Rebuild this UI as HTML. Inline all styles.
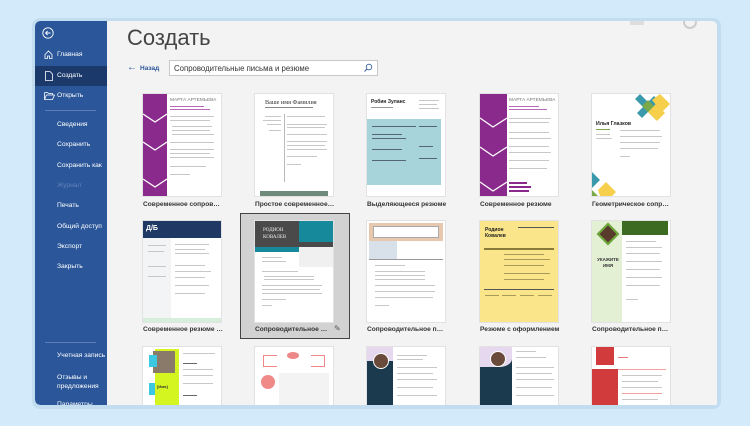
<!DOCTYPE html>
<html><head><meta charset="utf-8"><style>
*{margin:0;padding:0;box-sizing:border-box}
body{width:750px;height:426px;background:#d2eafa;position:relative;overflow:hidden;font-family:"Liberation Sans","DejaVu Sans",sans-serif}
.abs{position:absolute}
.frame{left:32px;top:18px;width:689px;height:391px;background:#c3ddf0;border-radius:8px}
.win{left:35px;top:21px;width:682px;height:384px;background:#f3f3f3;border-radius:5px 5px 0 5px;overflow:hidden}
.side{left:0;top:0;width:72px;height:384px;background:#2b579a;border-radius:5px 0 0 5px;overflow:hidden}
.side .it{position:absolute;left:22px;color:#fff;font-size:6.7px;white-space:nowrap}
.t{position:absolute;background:#fff;box-shadow:0 0 0 1px #e2e2e2;overflow:hidden}
.lbl{position:absolute;font-size:6.6px;font-weight:bold;color:#333;white-space:nowrap;width:80px;overflow:hidden;text-overflow:ellipsis}
.l{position:absolute;height:1px;background:#c8c8c8}
</style></head><body>
<div class="abs frame"></div>
<div class="abs win">
 <div class="abs side">
  <svg class="abs" style="left:7px;top:6px" width="12" height="12" viewBox="0 0 12 12"><circle cx="6" cy="6" r="5.2" fill="none" stroke="#fff" stroke-width=".9"/><path d="M8.5 6H3.6M5.6 4L3.6 6l2 2" fill="none" stroke="#fff" stroke-width=".9"/></svg>
  <svg class="abs" style="left:9px;top:29px" width="9" height="9" viewBox="0 0 9 9"><path d="M1 4.5L4.5 1 8 4.5V8.5H5.5V6H3.5V8.5H1z" fill="none" stroke="#fff" stroke-width=".8"/></svg>
  <div class="it" style="top:30px">Главная</div>
  <div class="abs" style="left:0;top:45px;width:72px;height:20px;background:#1b3a6b"></div>
  <svg class="abs" style="left:10px;top:50px" width="8" height="10" viewBox="0 0 8 10"><path d="M.5.5h4.5l2.5 2.5v6.5h-7z" fill="none" stroke="#fff" stroke-width=".8"/></svg>
  <div class="it" style="top:51px">Создать</div>
  <svg class="abs" style="left:9px;top:71px" width="11" height="8" viewBox="0 0 11 8"><path d="M.5.5h3l1 1h4v1.5M.5.5v7h8l2-4.5H2.5L.5 7.5" fill="none" stroke="#fff" stroke-width=".8"/></svg>
  <div class="it" style="top:71px">Открыть</div>
  <div class="abs" style="left:10px;top:89px;width:51px;height:1px;background:#5a7fb8"></div>
  <div class="it" style="top:100px">Сведения</div>
  <div class="it" style="top:120px">Сохранить</div>
  <div class="it" style="top:141px">Сохранить как</div>
  <div class="it" style="top:161px;color:#5f82b9">Журнал</div>
  <div class="it" style="top:181px">Печать</div>
  <div class="it" style="top:202px">Общий доступ</div>
  <div class="it" style="top:222px">Экспорт</div>
  <div class="it" style="top:242px">Закрыть</div>
  <div class="abs" style="left:10px;top:321px;width:51px;height:1px;background:#5a7fb8"></div>
  <div class="it" style="top:331px">Учетная запись</div>
  <div class="it" style="top:352px;line-height:9px">Отзывы и<br>предложения</div>
  <div class="it" style="top:380px">Параметры</div>
 </div>
 <div class="abs" style="left:92px;top:4px;font-size:22px;color:#444">Создать</div>
 <div class="abs" style="left:92px;top:41px;font-size:10px;color:#2b579a">←</div>
 <div class="abs" style="left:105px;top:44px;font-size:6.5px;font-weight:bold;color:#2b579a">Назад</div>
 <div class="abs" style="left:134px;top:39px;width:209px;height:16px;background:#fff;border:1px solid #c8c8c8;font-size:7.8px;color:#333;padding:3px 4px">Сопроводительные письма и резюме</div>
 <svg class="abs" style="left:328px;top:42px" width="10" height="10" viewBox="0 0 10 10"><circle cx="6" cy="4" r="2.8" fill="none" stroke="#2b579a" stroke-width=".8"/><path d="M4 6L1.5 8.5" stroke="#2b579a" stroke-width=".9"/></svg>
 <div class="abs" style="left:648px;top:-6px;width:14px;height:14px;border:2px solid #ccc;border-radius:50%"></div>
 <div class="abs" style="left:595px;top:-2px;width:14px;height:6px;background:#ddd"></div>

 <!-- Row 1 -->
 <div class="t" style="left:108px;top:73px;width:78px;height:102px">
  <div class="abs" style="left:0;top:0;width:24px;height:102px;background:#8a2a8c"></div>
  <svg class="abs" style="left:0;top:0" width="24" height="102"><path d="M0 20L12 28 24 20M0 48L12 56 24 48M0 85L12 93 24 85" fill="none" stroke="#fff" stroke-width="1.3"/></svg>
  <div class="abs" style="left:27px;top:4px;font-size:4.8px;color:#777">МАРТА АРТЕМЬЕВА</div>
  <div class="l" style="left:27px;top:12px;width:34px;background:#b86ab9"></div><div class="l" style="left:27px;top:15px;width:40px;background:#b86ab9"></div>
  <div class="l" style="left:27px;top:22px;width:44px"></div><div class="l" style="left:27px;top:26px;width:40px"></div><div class="l" style="left:29px;top:32px;width:40px"></div><div class="l" style="left:29px;top:36px;width:38px"></div><div class="l" style="left:29px;top:40px;width:42px"></div><div class="l" style="left:27px;top:48px;width:44px"></div><div class="l" style="left:27px;top:55px;width:44px"></div><div class="l" style="left:27px;top:59px;width:40px"></div><div class="l" style="left:27px;top:63px;width:44px"></div><div class="l" style="left:27px;top:72px;width:36px"></div><div class="l" style="left:27px;top:80px;width:20px"></div>
 </div>
 <div class="lbl" style="left:108px;top:180px">Современное сопроводительное письмо</div>

 <div class="t" style="left:220px;top:73px;width:78px;height:102px">
  <div class="abs" style="left:10px;top:5px;font-size:6.2px;color:#333;font-family:'Liberation Serif',serif">Ваше имя Фамилия</div>
  <div class="l" style="left:10px;top:13px;width:48px;background:#888"></div>
  <div class="abs" style="left:29px;top:20px;width:1px;height:68px;background:#bbb"></div>
  <div class="l" style="left:10px;top:22px;width:16px"></div><div class="l" style="left:8px;top:26px;width:18px"></div><div class="l" style="left:12px;top:30px;width:14px"></div><div class="l" style="left:14px;top:36px;width:12px"></div>
  <div class="l" style="left:32px;top:22px;width:38px"></div><div class="l" style="left:32px;top:30px;width:40px"></div><div class="l" style="left:32px;top:33px;width:38px"></div><div class="l" style="left:32px;top:40px;width:40px"></div><div class="l" style="left:32px;top:47px;width:40px"></div><div class="l" style="left:32px;top:51px;width:38px"></div><div class="l" style="left:32px;top:55px;width:40px"></div><div class="l" style="left:32px;top:62px;width:30px"></div><div class="l" style="left:32px;top:70px;width:14px"></div>
  <div class="abs" style="left:5px;top:97px;width:68px;height:5px;background:#6e8a7a"></div>
 </div>
 <div class="lbl" style="left:220px;top:180px">Простое современное сопроводительное</div>

 <div class="t" style="left:332px;top:73px;width:78px;height:102px">
  <div class="abs" style="left:4px;top:5px;font-size:5px;font-weight:bold;color:#222">Робин Зуланс</div>
  <div class="l" style="left:4px;top:13px;width:22px;background:#999"></div>
  <div class="l" style="left:52px;top:6px;width:20px"></div><div class="l" style="left:52px;top:10px;width:18px"></div><div class="l" style="left:52px;top:14px;width:20px"></div>
  <div class="abs" style="left:0;top:25px;width:74px;height:66px;background:#a7d3da"></div>
  <div class="l" style="left:5px;top:32px;width:44px;background:#567"></div><div class="l" style="left:52px;top:32px;width:18px;background:#567"></div>
  <div class="l" style="left:5px;top:40px;width:30px;background:#567"></div><div class="l" style="left:5px;top:44px;width:34px;background:#567"></div><div class="l" style="left:5px;top:55px;width:30px;background:#567"></div><div class="l" style="left:5px;top:66px;width:34px;background:#567"></div><div class="l" style="left:52px;top:52px;width:14px;background:#567"></div><div class="l" style="left:52px;top:64px;width:18px;background:#567"></div>
 </div>
 <div class="lbl" style="left:332px;top:180px">Выделяющееся резюме</div>

 <div class="t" style="left:445px;top:73px;width:78px;height:102px">
  <div class="abs" style="left:0;top:0;width:27px;height:102px;background:#8a2a8c"></div>
  <svg class="abs" style="left:0;top:0" width="27" height="102"><path d="M0 24L13 33 27 24M0 53L13 62 27 53M0 88L13 97 27 88" fill="none" stroke="#fff" stroke-width="1.3"/></svg>
  <div class="abs" style="left:29px;top:4px;font-size:4.8px;color:#777">МАРТА АРТЕМЬЕВА</div>
  <div class="l" style="left:29px;top:12px;width:30px;background:#b86ab9"></div><div class="l" style="left:29px;top:15px;width:38px;background:#b86ab9"></div>
  <div class="l" style="left:29px;top:24px;width:42px"></div><div class="l" style="left:29px;top:28px;width:40px"></div><div class="l" style="left:29px;top:38px;width:40px"></div><div class="l" style="left:29px;top:44px;width:42px"></div><div class="l" style="left:29px;top:52px;width:40px"></div><div class="l" style="left:29px;top:58px;width:42px"></div><div class="l" style="left:29px;top:66px;width:40px"></div><div class="l" style="left:29px;top:74px;width:38px"></div>
  <div class="abs" style="left:29px;top:88px;width:18px;height:1.5px;background:#8a2a8c"></div><div class="abs" style="left:29px;top:92px;width:22px;height:1.5px;background:#8a2a8c"></div><div class="abs" style="left:29px;top:96px;width:20px;height:1.5px;background:#8a2a8c"></div>
 </div>
 <div class="lbl" style="left:445px;top:180px">Современное резюме</div>

 <div class="t" style="left:557px;top:73px;width:78px;height:102px">
  <svg class="abs" style="left:0;top:0" width="78" height="102"><path d="M48 0l8 8 6-6 5 5-5 5 8 8-6 6-8-8-6 6-5-5 6-6-8-8z" fill="#3a9aab"/><path d="M60 6l8-6 10 10-8 8z" fill="#f6d04d"/><path d="M56 18l8-8 9 9-8 8z" fill="#f6d04d"/><path d="M50 12l6-6 6 6-6 6z" fill="#7aa84a"/><path d="M0 78l8 8-8 8z" fill="#3a9aab"/><path d="M6 96l8-8 10 10-4 4H8z" fill="#f6d04d"/><path d="M0 96l6 6H0z" fill="#7aa84a"/></svg>
  <div class="abs" style="left:4px;top:27px;font-size:5.2px;font-weight:bold;color:#222">Илья Глазков</div>
  <div class="abs" style="left:4px;top:35px;width:14px;height:1px;background:#7aa84a"></div>
  <div class="l" style="left:4px;top:40px;width:14px"></div><div class="l" style="left:4px;top:44px;width:16px"></div>
  <div class="l" style="left:28px;top:36px;width:40px"></div><div class="l" style="left:28px;top:42px;width:42px"></div><div class="l" style="left:28px;top:48px;width:40px"></div><div class="l" style="left:28px;top:54px;width:38px"></div><div class="l" style="left:28px;top:62px;width:10px"></div>
 </div>
 <div class="lbl" style="left:557px;top:180px">Геометрическое сопроводительное</div>

 <!-- Row 2 -->
 <div class="t" style="left:108px;top:200px;width:78px;height:101px">
  <div class="abs" style="left:0;top:0;width:78px;height:17px;background:#1f3864"></div>
  <div class="abs" style="left:3px;top:4px;font-size:7px;color:#fff;font-weight:bold">Д/Б</div>
  <div class="abs" style="left:0;top:17px;width:28px;height:80px;background:#f3f4f6"></div>
  <div class="l" style="left:32px;top:23px;width:34px"></div><div class="l" style="left:32px;top:28px;width:30px"></div><div class="l" style="left:32px;top:32px;width:34px"></div><div class="l" style="left:32px;top:44px;width:30px"></div><div class="l" style="left:32px;top:50px;width:36px"></div><div class="l" style="left:32px;top:56px;width:30px"></div><div class="l" style="left:32px;top:64px;width:34px"></div><div class="l" style="left:32px;top:72px;width:30px"></div>
  <div class="l" style="left:5px;top:24px;width:18px"></div><div class="l" style="left:5px;top:30px;width:16px"></div><div class="l" style="left:5px;top:45px;width:18px"></div><div class="l" style="left:5px;top:55px;width:18px"></div>
  <div class="abs" style="left:0;top:97px;width:78px;height:4px;background:#d6eedc"></div>
 </div>
 <div class="lbl" style="left:108px;top:305px">Современное резюме с фотографией</div>

 <div class="abs" style="left:205px;top:192px;width:110px;height:126px;background:#d2d2d2;border:1px solid #444"></div>
 <div class="t" style="left:220px;top:200px;width:78px;height:101px">
  <div class="abs" style="left:0;top:0;width:44px;height:26px;background:#4a4a4a"></div>
  <div class="abs" style="left:0;top:26px;width:44px;height:5px;background:#168a9a"></div>
  <div class="abs" style="left:44px;top:0;width:34px;height:21px;background:#168a9a"></div>
  <div class="abs" style="left:44px;top:21px;width:34px;height:5px;background:#4a4a4a"></div>
  <div class="abs" style="left:44px;top:26px;width:34px;height:20px;background:#f0f0f0"></div>
  <div class="abs" style="left:8px;top:6px;font-size:5px;color:#eee;line-height:7px;font-family:'Liberation Serif',serif">РОДИОН<br>КОВАЛЕВ</div>
  <div class="l" style="left:7px;top:36px;width:20px"></div><div class="l" style="left:7px;top:40px;width:24px"></div><div class="l" style="left:7px;top:50px;width:36px"></div><div class="l" style="left:9px;top:55px;width:50px"></div><div class="l" style="left:9px;top:58px;width:50px"></div><div class="l" style="left:7px;top:64px;width:60px"></div><div class="l" style="left:7px;top:68px;width:58px"></div><div class="l" style="left:7px;top:72px;width:60px"></div><div class="l" style="left:7px;top:78px;width:24px"></div><div class="l" style="left:7px;top:84px;width:10px"></div>
 </div>
 <div class="lbl" style="left:220px;top:305px;width:76px">Сопроводительное письмо</div>
 <div class="abs" style="left:299px;top:303px;font-size:8px;color:#555">✎</div>

 <div class="t" style="left:332px;top:200px;width:78px;height:101px">
  <div class="abs" style="left:2px;top:2px;width:74px;height:18px;background:#e8c8ac"></div>
  <div class="abs" style="left:6px;top:5px;width:66px;height:12px;background:#fff;border:1px solid #aaa"></div>
  <div class="abs" style="left:2px;top:20px;width:28px;height:18px;background:#d8e0ea"></div>
  <div class="abs" style="left:2px;top:38px;width:74px;height:1px;background:#999"></div>
  <div class="l" style="left:8px;top:44px;width:30px"></div><div class="l" style="left:8px;top:50px;width:50px"></div><div class="l" style="left:8px;top:54px;width:50px"></div><div class="l" style="left:8px;top:58px;width:50px"></div><div class="l" style="left:8px;top:64px;width:60px"></div><div class="l" style="left:8px;top:70px;width:60px"></div><div class="l" style="left:8px;top:76px;width:58px"></div><div class="l" style="left:8px;top:84px;width:14px"></div>
 </div>
 <div class="lbl" style="left:332px;top:305px">Сопроводительное письмо</div>

 <div class="t" style="left:445px;top:200px;width:78px;height:101px;background:#fae58a">
  <div class="abs" style="left:5px;top:6px;font-size:5px;font-weight:bold;color:#222;line-height:6px">Родион<br>Ковалев</div>
  <div class="abs" style="left:38px;top:6px;width:36px;height:1px;background:#555"></div>
  <div class="abs" style="left:4px;top:27px;width:70px;height:1.5px;background:#8a7a3a"></div>
  <div class="l" style="left:24px;top:33px;width:40px;background:#a99a5a"></div><div class="l" style="left:24px;top:38px;width:46px;background:#a99a5a"></div><div class="l" style="left:24px;top:44px;width:40px;background:#a99a5a"></div><div class="l" style="left:24px;top:52px;width:46px;background:#a99a5a"></div><div class="l" style="left:24px;top:58px;width:40px;background:#a99a5a"></div>
  <div class="abs" style="left:4px;top:68px;width:70px;height:1px;background:#555"></div>
  <div class="l" style="left:5px;top:74px;width:14px;background:#a99a5a"></div><div class="l" style="left:22px;top:74px;width:14px;background:#a99a5a"></div><div class="l" style="left:40px;top:74px;width:14px;background:#a99a5a"></div><div class="l" style="left:58px;top:74px;width:14px;background:#a99a5a"></div>
 </div>
 <div class="lbl" style="left:445px;top:305px">Резюме с оформлением</div>

 <div class="t" style="left:557px;top:200px;width:78px;height:101px">
  <div class="abs" style="left:0;top:0;width:30px;height:101px;background:#e3f0d4"></div>
  <div class="abs" style="left:30px;top:0;width:46px;height:14px;background:#3e6b22"></div>
  <div class="abs" style="left:8px;top:5px;width:16px;height:16px;background:#5a3a2a;transform:rotate(45deg);border:2px solid #6aa838"></div>
  <div class="abs" style="left:5px;top:36px;font-size:4.5px;font-weight:bold;color:#333;text-align:center;width:22px;line-height:6px">УКАЖИТЕ ИМЯ</div>
  <div class="l" style="left:34px;top:20px;width:30px"></div><div class="l" style="left:34px;top:26px;width:36px"></div><div class="l" style="left:34px;top:32px;width:34px"></div><div class="l" style="left:34px;top:40px;width:36px"></div><div class="l" style="left:34px;top:48px;width:34px"></div><div class="l" style="left:34px;top:56px;width:36px"></div><div class="l" style="left:34px;top:64px;width:34px"></div><div class="l" style="left:34px;top:78px;width:12px"></div>
 </div>
 <div class="lbl" style="left:557px;top:305px">Сопроводительное письмо</div>

 <!-- Row 3 -->
 <div class="t" style="left:108px;top:326px;width:78px;height:60px">
  <div class="abs" style="left:12px;top:2px;width:24px;height:58px;background:#d4f51f"></div>
  <div class="abs" style="left:10px;top:4px;width:22px;height:22px;background:#8a7a6a"></div>
  <div class="abs" style="left:6px;top:8px;width:8px;height:12px;background:#3cc8e0"></div>
  <div class="abs" style="left:6px;top:36px;width:6px;height:12px;background:#3cc8e0"></div>
  <div class="abs" style="left:14px;top:37px;font-size:4px;color:#333;font-weight:bold">[Имя]</div>
  <div class="l" style="left:40px;top:6px;width:32px"></div><div class="l" style="left:40px;top:16px;width:14px;background:#666"></div><div class="l" style="left:40px;top:22px;width:30px"></div><div class="l" style="left:40px;top:28px;width:30px"></div><div class="l" style="left:40px;top:36px;width:30px"></div><div class="l" style="left:40px;top:48px;width:14px;background:#666"></div>
 </div>
 <div class="t" style="left:220px;top:326px;width:78px;height:60px">
  <div class="abs" style="left:8px;top:8px;width:14px;height:12px;border:1px solid #e88;border-right:none"></div>
  <div class="abs" style="left:56px;top:8px;width:14px;height:12px;border:1px solid #e88;border-left:none"></div>
  <div class="abs" style="left:32px;top:5px;width:12px;height:7px;background:#e88;border-radius:50%"></div>
  <div class="abs" style="left:6px;top:28px;width:14px;height:14px;background:#f08a88;border-radius:50%"></div>
  <div class="abs" style="left:24px;top:26px;width:50px;height:34px;background:#f3f3f3"></div>
 </div>
 <div class="t" style="left:332px;top:326px;width:78px;height:60px">
  <div class="abs" style="left:0;top:0;width:26px;height:60px;background:#1c3a4e"></div>
  <div class="abs" style="left:0;top:0;width:26px;height:14px;background:#e6d8ee"></div>
  <div class="abs" style="left:6px;top:6px;width:16px;height:16px;border-radius:50%;background:#6a4a3a;border:1.5px solid #fff"></div>
  <div class="l" style="left:30px;top:8px;width:30px"></div><div class="l" style="left:30px;top:12px;width:26px"></div><div class="l" style="left:30px;top:20px;width:40px"></div><div class="l" style="left:30px;top:26px;width:36px"></div><div class="l" style="left:30px;top:32px;width:40px"></div><div class="l" style="left:30px;top:40px;width:36px"></div><div class="l" style="left:30px;top:48px;width:40px"></div>
 </div>
 <div class="t" style="left:445px;top:326px;width:78px;height:60px">
  <div class="abs" style="left:0;top:0;width:32px;height:60px;background:#1c3a4e"></div>
  <div class="abs" style="left:0;top:0;width:32px;height:20px;background:#e6d8ee;border-radius:0 0 40% 0"></div>
  <div class="abs" style="left:10px;top:4px;width:16px;height:16px;border-radius:50%;background:#6a4a3a;border:1.5px solid #fff"></div>
  <div class="l" style="left:36px;top:4px;width:20px"></div><div class="l" style="left:36px;top:10px;width:30px"></div><div class="l" style="left:36px;top:20px;width:38px"></div><div class="l" style="left:36px;top:26px;width:36px"></div><div class="l" style="left:36px;top:32px;width:38px"></div><div class="l" style="left:36px;top:40px;width:36px"></div><div class="l" style="left:36px;top:48px;width:38px"></div>
 </div>
 <div class="t" style="left:557px;top:326px;width:78px;height:60px">
  <div class="abs" style="left:4px;top:0;width:18px;height:18px;background:#d23b3b"></div>
  <div class="abs" style="left:0;top:22px;width:26px;height:38px;background:#d23b3b"></div>
  <div class="l" style="left:26px;top:10px;width:10px;background:#e77"></div><div class="l" style="left:26px;top:22px;width:48px;background:#f2a0a0"></div>
  <div class="l" style="left:30px;top:28px;width:40px"></div><div class="l" style="left:30px;top:34px;width:36px"></div><div class="l" style="left:30px;top:40px;width:40px"></div><div class="l" style="left:30px;top:46px;width:40px;background:#f2a0a0"></div><div class="l" style="left:30px;top:52px;width:36px"></div>
 </div>
</div>
</body></html>
